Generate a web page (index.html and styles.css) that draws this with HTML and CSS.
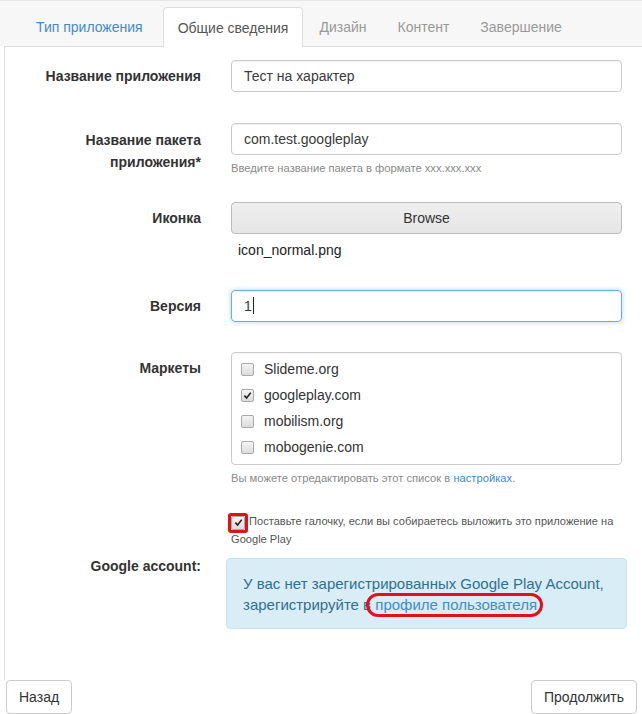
FILE: index.html
```html
<!DOCTYPE html>
<html lang="ru">
    <head>
        <meta charset="UTF-8" />
        <title>Мастер приложения</title>
        <link rel="stylesheet" href="styles.css">
    </head>
    <body>
        <nav class="tabs">
            <a class="tab tab-done" href="#">Тип приложения</a>
            <a class="tab tab-active" href="#">Общие сведения</a>
            <a class="tab" href="#">Дизайн</a>
            <a class="tab" href="#">Контент</a>
            <a class="tab" href="#">Завершение</a>
        </nav>
        <section class="panel">
            <div class="row row-name">
                <label class="label">Название приложения</label>
                <div class="control">
                    <input class="field" type="text" value="Тест на характер" />
                </div>
            </div>
            <div class="row row-package">
                <label class="label">Название пакета приложения*</label>
                <div class="control">
                    <input class="field" type="text" value="com.test.googleplay" />
                    <div class="help">Введите название пакета в формате xxx.xxx.xxx</div>
                </div>
            </div>
            <div class="row row-icon">
                <label class="label">Иконка</label>
                <div class="control">
                    <button class="browse" type="button">Browse</button>
                    <div class="filename">icon_normal.png</div>
                </div>
            </div>
            <div class="row row-version">
                <label class="label">Версия</label>
                <div class="control">
                    <div class="field field-focus">1<span class="caret"></span></div>
                </div>
            </div>
            <div class="row row-markets">
                <label class="label">Маркеты</label>
                <div class="control">
                    <div class="markets">
                        <label class="market"><span class="box"></span>Slideme.org</label>
                        <label class="market">
                            <span class="box">
                                <svg viewBox="0 0 10 10" width="9" height="9"><path d="M1.5 5.2 L4 7.8 L8.6 1.8" fill="none" stroke="#222" stroke-width="1.8" /></svg>
                            </span>googleplay.com
                        </label>
                        <label class="market"><span class="box"></span>mobilism.org</label>
                        <label class="market"><span class="box"></span>mobogenie.com</label>
                    </div>
                    <div class="help">Вы можете отредактировать этот список в <a href="#">настройках</a>.</div>
                </div>
            </div>
            <div class="row row-publish">
                <div class="label"></div>
                <div class="control publish">
                    <span class="box marked">
                        <svg viewBox="0 0 10 10" width="9" height="9"><path d="M1.5 5.2 L4 7.8 L8.6 1.8" fill="none" stroke="#222" stroke-width="1.8" /></svg>
                    </span>Поставьте галочку, если вы собираетесь выложить это приложение на Google Play
                </div>
            </div>
            <div class="row row-account">
                <label class="label">Google account:</label>
                <div class="control">
                    <div class="alert">
                        <span>У вас нет зарегистрированных Google Play Account,</span>
                        <span>зарегистрируйте в</span>
                        <a class="circled" href="#">профиле пользователя</a>
                    </div>
                </div>
            </div>
        </section>
        <footer class="actions">
            <button class="btn" type="button">Назад</button>
            <button class="btn" type="button">Продолжить</button>
        </footer>
    </body>
</html>
```

FILE: styles.css
```css
:root {
    --link: #428bca;
    --text: #333;
    --muted: #8a8a8a;
    --line: #dddddd;
    --field-line: #cccccc;
    --red: #e2101a;
}
html,
body {
    margin: 0;
    height: 100%;
    background: #fff;
    font-family: "Liberation Sans", Arial, sans-serif;
    font-size: 14px;
    color: var(--text);
}
body {
    overflow: hidden;
}
.tabs {
    display: flex;
    background: #f7f7f7;
    border-top: 1px solid #e6e6e6;
    padding: 6px 0 0 20px;
    height: 39px;
}
.tab {
    display: flex;
    align-items: center;
    padding: 0 14px 0 14px;
    color: #999;
    text-decoration: none;
    border: 1px solid transparent;
    border-bottom: none;
    border-radius: 4px 4px 0 0;
    margin-right: 1px;
}
.tab-done {
    color: var(--link);
    padding: 0 18px 0 15px;
}
.tab-active {
    background: #fff;
    color: #555;
    border-color: var(--line);
    margin-bottom: -1px;
    position: relative;
}
.panel {
    margin-left: 4px;
    border-left: 1px solid var(--line);
    border-top: 1px solid var(--line);
    background: #fff;
    padding: 13px 0 51px 0;
}
.row {
    display: flex;
    gap: 30px;
}
.label {
    flex: 0 0 196px;
    text-align: right;
    font-weight: 700;
    line-height: 22px;
    padding-top: 5px;
    box-sizing: border-box;
}
.row-package .label {
    padding-left: 60px;
    padding-top: 6px;
}
.row-account .label {
    padding-top: 0;
    line-height: 16px;
}
.control {
    width: 391px;
}
.row-name {
    margin-bottom: 31px;
}
.row-package {
    margin-bottom: 25px;
}
.row-icon {
    margin-bottom: 31px;
}
.row-version {
    margin-bottom: 30px;
}
.row-markets {
    margin-bottom: 25px;
}
.row-publish {
    margin-bottom: 10px;
}
.field {
    display: block;
    width: 100%;
    height: 32px;
    box-sizing: border-box;
    border: 1px solid var(--field-line);
    border-radius: 4px;
    padding: 0 12px;
    font: inherit;
    font-size: 14px;
    line-height: 30px;
    color: #3a3a3a;
    box-shadow: inset 0 1px 1px rgba(0, 0, 0, 0.06);
    outline: none;
}
.field-focus {
    border-color: #66afe9;
    box-shadow: inset 0 1px 1px rgba(0, 0, 0, 0.06),
        0 0 5px rgba(102, 175, 233, 0.55);
}
.caret {
    display: inline-block;
    width: 1px;
    height: 17px;
    background: #222;
    vertical-align: -3px;
    margin-left: 1px;
}
.help {
    margin-top: 5px;
    font-size: 11.2px;
    line-height: 17px;
    color: var(--muted);
}
.help a {
    color: var(--link);
    text-decoration: none;
}
.browse {
    display: block;
    width: 100%;
    height: 32px;
    border: 1px solid #bdbdbd;
    border-radius: 4px;
    background: linear-gradient(#efefef, #e6e6e6);
    font: inherit;
    font-size: 14px;
    color: #333;
}
.filename {
    padding: 7px 0 0 7px;
    line-height: 18px;
    color: #222;
}
.markets {
    border: 1px solid var(--field-line);
    border-radius: 4px;
    padding: 3px 9px 4px;
    box-shadow: inset 0 1px 1px rgba(0, 0, 0, 0.04);
}
.market {
    display: flex;
    align-items: center;
    height: 26px;
    font-size: 14px;
    color: #333;
}
.box {
    display: inline-flex;
    align-items: center;
    justify-content: center;
    width: 11px;
    height: 11px;
    border: 1px solid #a9a9a9;
    border-radius: 2px;
    background: linear-gradient(#f4f4f4, #dcdcdc);
    margin-right: 10px;
    flex: 0 0 auto;
}
.publish {
    width: 396px;
    font-size: 11.1px;
    line-height: 18px;
    color: #555;
}
.publish .box {
    width: 12px;
    height: 12px;
    margin: 0 4px 0 0;
    vertical-align: -2px;
    position: relative;
}
.marked::after {
    content: "";
    position: absolute;
    left: -4px;
    top: -4px;
    right: -4px;
    bottom: -4px;
    border: 3px solid var(--red);
    border-radius: 3px;
}
.alert {
    margin: 0 -5px;
    padding: 14px 16px 13px;
    background: #d9edf7;
    border: 1px solid #c6e3f1;
    border-radius: 4px;
    color: #31708f;
    font-size: 15px;
    line-height: 21px;
}
.alert a {
    color: var(--link);
    text-decoration: none;
}
.circled {
    position: relative;
}
.circled::after {
    content: "";
    position: absolute;
    left: -9px;
    right: -6px;
    top: -3px;
    bottom: -4px;
    border: 3px solid var(--red);
    border-radius: 12px;
}
.actions {
    display: flex;
    justify-content: space-between;
    padding: 0 5px 0 6px;
}
.btn {
    height: 34px;
    padding: 0 12px;
    border: 1px solid #ccc;
    border-radius: 4px;
    background: #fff;
    font: inherit;
    font-size: 14px;
    color: #333;
}
```
